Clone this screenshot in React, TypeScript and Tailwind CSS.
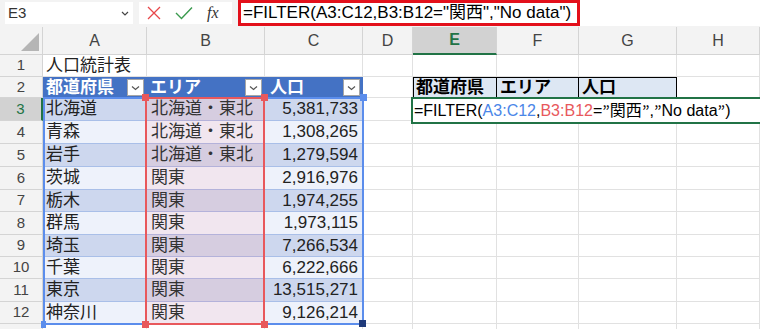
const font = { fontFamily: '"Liberation Sans", "Noto Sans CJK JP", sans-serif' };

const colLetters = ["A", "B", "C", "D", "E", "F", "G", "H"];

const data = [
  ["北海道", "北海道・東北", "5,381,733"],
  ["青森", "北海道・東北", "1,308,265"],
  ["岩手", "北海道・東北", "1,279,594"],
  ["茨城", "関東", "2,916,976"],
  ["栃木", "関東", "1,974,255"],
  ["群馬", "関東", "1,973,115"],
  ["埼玉", "関東", "7,266,534"],
  ["千葉", "関東", "6,222,666"],
  ["東京", "関東", "13,515,271"],
  ["神奈川", "関東", "9,126,214"],
];

function FilterButton() {
  return (
    <div className="ml-auto mr-[3px] flex h-[17px] w-[17px] items-center justify-center border border-[#a6a6a6] bg-white">
      <svg width="9" height="6" viewBox="0 0 9 6">
        <path d="M1 1.5 L4.5 4.5 L8 1.5" fill="none" stroke="#555" strokeWidth="1.2" />
      </svg>
    </div>
  );
}

function RowHeader({ n, active }: { n?: number; active?: boolean }) {
  return (
    <div
      className={
        active
          ? "flex items-center justify-center border-r-2 border-b border-r-[#217346] border-b-[#d4d4d4] bg-[#d2d2d2] text-[15px] text-[#217346]"
          : "flex items-center justify-center border-r border-b border-[#d4d4d4] bg-[#f3f3f3] text-[15px] text-[#444]"
      }
    >
      {n}
    </div>
  );
}

function Blank() {
  return <div className="border-r border-b border-[#e1e1e1] bg-white" />;
}

function Q() {
  return <span className="font-['Noto_Sans_CJK_JP']">”</span>;
}

export default function App() {
  return (
    <div className="h-[329px] w-[760px] overflow-hidden bg-white text-[#222]" style={font}>
      {/* formula bar */}
      <div className="flex h-[27px] items-start gap-[6px] bg-[#f3f3f3] pl-[5px] pt-[2px]">
        <div className="flex h-[22px] w-[128px] items-center bg-white pl-[3px] pr-[4px] text-[15px] text-[#333]">
          E3
          <svg className="ml-auto" width="8" height="5" viewBox="0 0 8 5">
            <path d="M1 1 L4 4 L7 1" fill="none" stroke="#444" strokeWidth="1.2" />
          </svg>
        </div>
        <div className="flex h-[22px] w-[93px] items-center gap-[14px] bg-white pl-[8px]">
          <svg width="14" height="14" viewBox="0 0 14 14">
            <path d="M1 1 L13 13 M13 1 L1 13" stroke="#e8474a" strokeWidth="1.3" />
          </svg>
          <svg width="18" height="14" viewBox="0 0 18 14">
            <path d="M1 7 L6.5 12.5 L17 1.5" fill="none" stroke="#3a9a4e" strokeWidth="1.4" />
          </svg>
          <span className="font-['Liberation_Serif'] text-[16px] italic text-[#333]">fx</span>
        </div>
        <div className="-mt-[2px] flex h-[26px] flex-1 items-start bg-white">
          <div className="flex h-[26px] items-center border-[3px] border-[#e3101b] pl-[2px] pr-[6px] text-[17px] text-black">
            =FILTER(A3:C12,B3:B12="関西","No data")
          </div>
        </div>
      </div>

      {/* sheet */}
      <div className="relative grid grid-cols-[43px_104px_118px_98px_50px_84px_82px_98px_83px] grid-rows-[28px_22px_21px_23px_23px_23px_23px_22px_23px_22px_22px_23px_22px_20px]">
        {/* column headers */}
        <div className="relative border-r border-b border-[#d4d4d4] bg-[#f3f3f3]">
          <svg className="absolute right-[3px] bottom-[3px]" width="18" height="18" viewBox="0 0 18 18">
            <path d="M18 0 L18 18 L0 18 Z" fill="#b5b5b5" />
          </svg>
        </div>
        {colLetters.map((c) =>
          c === "E" ? (
            <div
              key={c}
              className="flex items-center justify-center border-r border-b-2 border-r-[#d4d4d4] border-b-[#217346] bg-[#d2d2d2] text-[16px] font-bold text-[#217346]"
            >
              {c}
            </div>
          ) : (
            <div
              key={c}
              className="flex items-center justify-center border-r border-b border-[#d4d4d4] bg-[#f3f3f3] text-[16px] text-[#444]"
            >
              {c}
            </div>
          )
        )}

        {/* row 1 */}
        <RowHeader n={1} />
        <div className="flex items-center border-r border-b border-[#e1e1e1] bg-white pl-[3px] text-[17px] whitespace-nowrap">
          人口統計表
        </div>
        {[0, 1, 2, 3, 4, 5, 6].map((i) => (
          <Blank key={i} />
        ))}

        {/* row 2 */}
        <RowHeader n={2} />
        <div className="flex items-center bg-[#4472c4] pl-[3px] text-[17px] font-bold text-white">
          都道府県
          <FilterButton />
        </div>
        <div className="flex items-center bg-[#4472c4] pl-[3px] text-[17px] font-bold text-white">
          エリア
          <FilterButton />
        </div>
        <div className="flex items-center bg-[#4472c4] pl-[5px] text-[17px] font-bold text-white">
          人口
          <FilterButton />
        </div>
        <Blank />
        <div className="flex items-center border border-black bg-[#dde7f3] pl-[2px] text-[17px] font-bold text-black">
          都道府県
        </div>
        <div className="flex items-center border-y border-r border-black bg-[#dde7f3] pl-[3px] text-[17px] font-bold text-black">
          エリア
        </div>
        <div className="flex items-center border-y border-r border-black bg-[#dde7f3] pl-[3px] text-[17px] font-bold text-black">
          人口
        </div>
        <Blank />

        {/* rows 3-12 */}
        {data.map((row, i) => {
          const band = i % 2 === 0;
          return [
            <RowHeader key={`h${i}`} n={i + 3} active={i === 0} />,
            <div
              key={`a${i}`}
              className={
                band
                  ? "flex items-center border-b border-[#a9bfe8] bg-[#cdd7ee] pl-[3px] text-[17px]"
                  : "flex items-center border-b border-[#a9bfe8] bg-[#eef2fb] pl-[3px] text-[17px]"
              }
            >
              {row[0]}
            </div>,
            <div
              key={`b${i}`}
              className={
                band
                  ? "flex items-center border-b border-[#b4b2da] bg-[#d6cde0] pl-[4px] text-[17px] text-[#333]"
                  : "flex items-center border-b border-[#b4b2da] bg-[#f1e6ef] pl-[4px] text-[17px] text-[#333]"
              }
            >
              {row[1]}
            </div>,
            <div
              key={`c${i}`}
              className={
                band
                  ? "flex items-center justify-end border-b border-[#a9bfe8] bg-[#cdd7ee] pr-[5px] text-[17px]"
                  : "flex items-center justify-end border-b border-[#a9bfe8] bg-[#eef2fb] pr-[5px] text-[17px]"
              }
            >
              {row[2]}
            </div>,
            ...[0, 1, 2, 3, 4].map((j) => <Blank key={`x${i}-${j}`} />),
          ];
        })}

        {/* row 13 (only its top edge is in view) */}
        <RowHeader />
        {[0, 1, 2, 3, 4, 5, 6, 7].map((i) => (
          <Blank key={`r13-${i}`} />
        ))}

        {/* reference highlights */}
        <div className="pointer-events-none absolute top-[70px] left-[43px] h-[228px] w-[321px] border-2 border-[#5b8dec]" />
        <div className="pointer-events-none absolute top-[70px] left-[145px] h-[228px] w-[120px] border-2 border-[#e8585c]" />
        <div className="absolute top-[67px] left-[142px] h-[7px] w-[7px] bg-[#e8585c]" />
        <div className="absolute top-[67px] left-[261px] h-[7px] w-[7px] bg-[#e8585c]" />
        <div className="absolute top-[294px] left-[142px] h-[7px] w-[7px] bg-[#e8585c]" />
        <div className="absolute top-[294px] left-[261px] h-[7px] w-[7px] bg-[#e8585c]" />
        <div className="absolute top-[67px] left-[360px] h-[7px] w-[7px] bg-[#5b8dec]" />
        <div className="absolute top-[294px] left-[41px] h-[7px] w-[5px] bg-[#5b8dec]" />
        <div className="absolute top-[293px] left-[359px] h-[7px] w-[7px] bg-[#1f3a7a]" />

        {/* active cell in edit mode */}
        <div className="absolute top-[70px] left-[411px] flex h-[27px] w-[360px] items-center border-2 border-[#217346] bg-white pl-[1px] text-[16px] whitespace-nowrap text-black">
          =FILTER(<span className="text-[#4a86e8]">A3:C12</span>,<span className="text-[#e8585c]">B3:B12</span>=<Q />関西<Q />,<Q />No data<Q />)
        </div>
      </div>
    </div>
  );
}
